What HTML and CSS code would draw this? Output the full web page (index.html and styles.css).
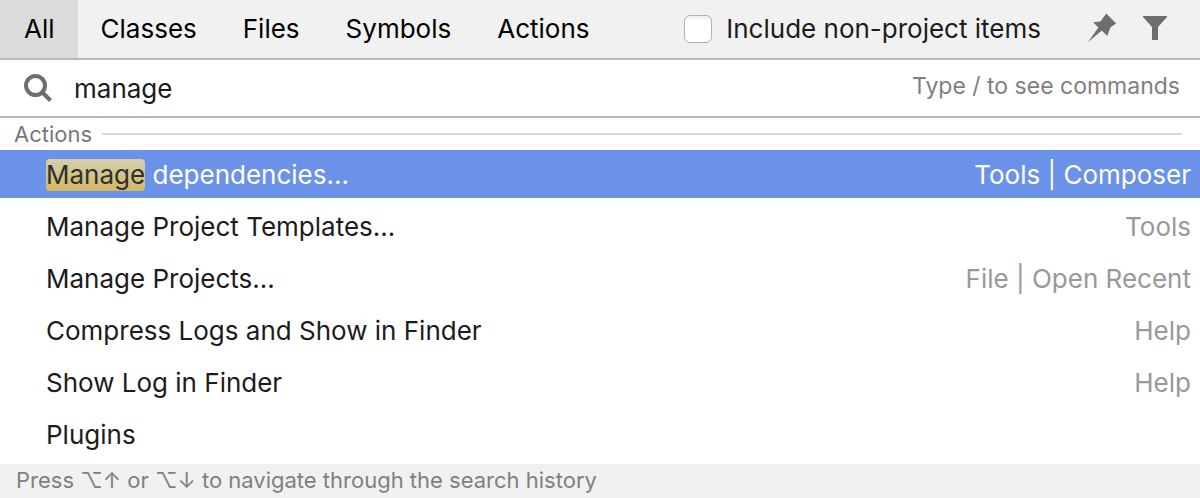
FILE: index.html
```html
<!DOCTYPE html>
<html lang="en">
<head>
<meta charset="utf-8">
<title>Search Everywhere</title>
<link rel="stylesheet" href="styles.css">
</head>
<body>
<main class="popup">
  <header class="toolbar">
    <nav class="tabs">
      <button class="tab tab-active" type="button">All</button>
      <button class="tab" type="button">Classes</button>
      <button class="tab" type="button">Files</button>
      <button class="tab" type="button">Symbols</button>
      <button class="tab" type="button">Actions</button>
    </nav>
    <div class="options">
      <label class="include" for="non-project"><input class="check" type="checkbox" id="non-project">Include non-project items</label>
      <div class="tools">
        <button class="tool" type="button" aria-label="Pin">
          <svg width="32" height="32" viewBox="0 0 32 32" fill="#6e6e6e"><path d="M19.200 0.600 29.200 10.400 23.600 14.200 20.200 22.800 14.800 17.600 1 29.200 11.400 14.400 6.200 9.200 13.400 8.400z"/></svg>
        </button>
        <button class="tool" type="button" aria-label="Filter">
          <svg width="32" height="32" viewBox="0 0 32 32" fill="#6e6e6e"><path d="M4 3H28V4L19 14V27H13V14L4 4z"/></svg>
        </button>
      </div>
    </div>
  </header>
  <div class="search">
    <svg class="search-icon" width="32" height="32" viewBox="0 0 32 32" fill="none" stroke="#6e6e6e" stroke-width="4"><circle cx="13.500" cy="13.500" r="9.500"/><path d="M20 20 28.500 28.500"/></svg>
    <input class="query" type="text" value="manage" aria-label="Search" aria-describedby="hint">
    <span class="hint" id="hint">Type / to see commands</span>
  </div>
  <section class="results">
    <h2 class="group">Actions</h2>
    <ul class="list">
      <li class="item item-selected"><span><mark class="match">Manage</mark> dependencies...</span><span class="place">Tools | Composer</span></li>
      <li class="item"><span>Manage Project Templates...</span><span class="place">Tools</span></li>
      <li class="item"><span>Manage Projects...</span><span class="place">File | Open Recent</span></li>
      <li class="item"><span>Compress Logs and Show in Finder</span><span class="place">Help</span></li>
      <li class="item"><span>Show Log in Finder</span><span class="place">Help</span></li>
      <li class="item"><span>Plugins</span></li>
    </ul>
  </section>
  <footer class="footer">Press ⌥↑ or ⌥↓ to navigate through the search history</footer>
</main>
</body>
</html>
```
FILE: styles.css
```css
* {
  box-sizing: border-box;
}

body {
  margin: 0;
  background: #fff;
  color: #1c1c1c;
  font: 26px/32px Inter, "Liberation Sans", sans-serif;
}

button,
input {
  font: inherit;
}

.toolbar {
  display: flex;
  justify-content: space-between;
  background: #f1f1f1;
  border-bottom: 2px solid #b9b9b9;
}

.tabs,
.options,
.include,
.tools {
  display: flex;
  align-items: center;
}

.tab {
  padding: 13px 23px;
  border: 0;
  background: none;
  color: #000;
}

.tab:first-child {
  padding-left: 24px;
}

.tab-active {
  background: #dcdcdc;
}

.options {
  gap: 46px;
  padding-right: 29px;
}

.include {
  gap: 14px;
}

.check {
  appearance: none;
  width: 28px;
  height: 28px;
  margin: 0;
  border: 1px solid #b0b0b0;
  border-radius: 6px;
  background: linear-gradient(#ececec, #fff 5px);
}

.tools {
  gap: 20px;
}

.tool {
  display: flex;
  padding: 0;
  border: 0;
  background: none;
}

.search {
  display: flex;
  align-items: center;
  height: 58px;
  padding: 0 20px 0 22px;
  border-bottom: 2px solid #b9b9b9;
}

.query {
  flex: 1;
  min-width: 0;
  padding: 2px 0 0;
  margin-left: 20px;
  border: 0;
  outline: 0;
  color: #1c1c1c;
}

.hint {
  padding-bottom: 4px;
  color: #808080;
  font-size: 23px;
}

.group {
  display: flex;
  align-items: center;
  gap: 10px;
  margin: 0;
  padding: 0 18px 0 14px;
  color: #787878;
  font-size: 22px;
  font-weight: 400;
}

.group::after {
  content: "";
  flex: 1;
  height: 2px;
  background: #d9d9d9;
}

.list {
  display: flex;
  flex-direction: column;
  gap: 4px;
  margin: 0;
  padding: 0 0 6px;
  list-style: none;
}

.item {
  display: flex;
  justify-content: space-between;
  padding: 9px 9px 7px 46px;
}

.item-selected {
  background: #6a92e9;
  color: #fff;
}

.match {
  display: inline-block;
  border-radius: 4px;
  background: linear-gradient(#d6cfad, #d2b962);
  color: #303030;
}

.place {
  color: #999;
}

.item-selected .place {
  color: #fff;
}

.footer {
  padding: 0 16px 2px;
  background: #f1f1f1;
  color: #808080;
  font-size: 22px;
}
```
